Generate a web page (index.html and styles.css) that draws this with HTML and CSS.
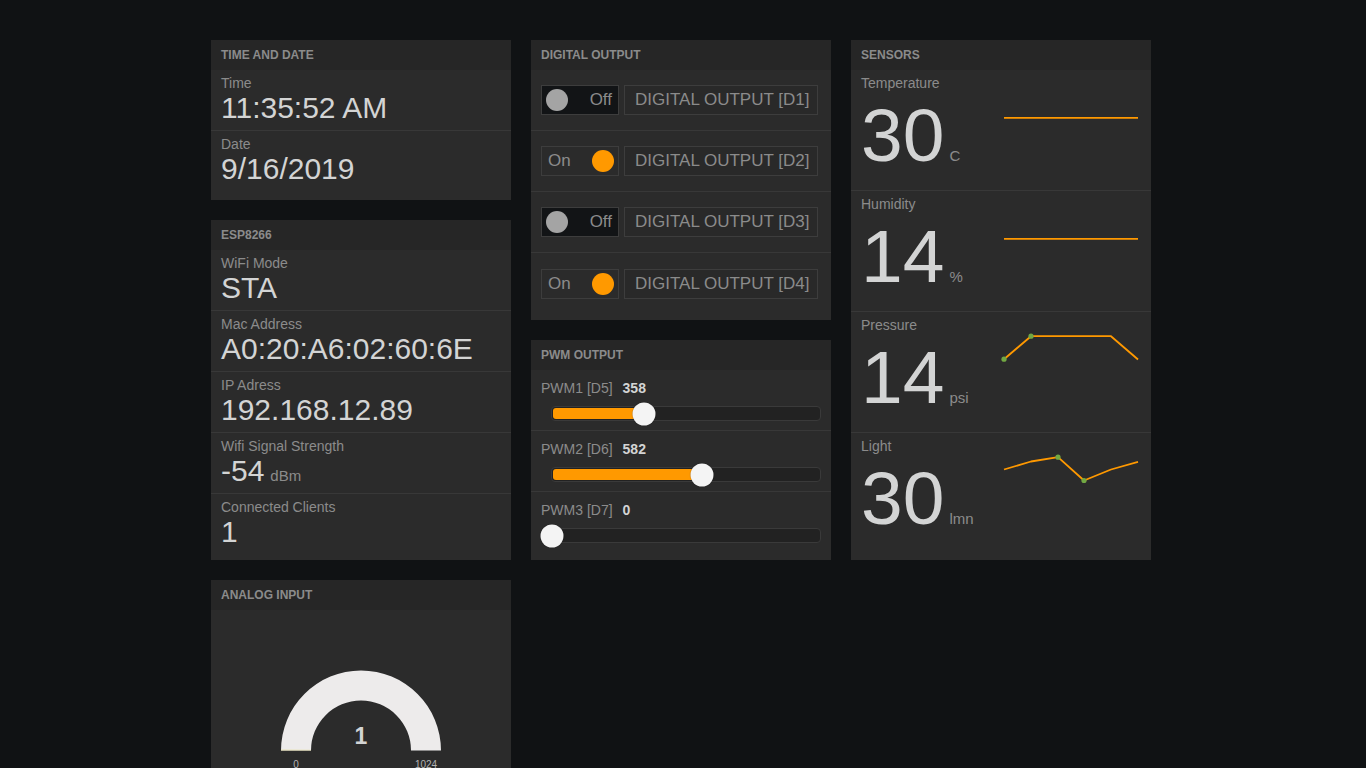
FILE: index.html
```html
<!DOCTYPE html>
<html lang="en">
<head>
<meta charset="utf-8">
<title>ESP8266 Dashboard</title>
<link rel="stylesheet" href="styles.css">
</head>
<body>
<div class="board">
  <div class="col">
    <section class="pane pane-time">
      <h2 class="pane-title">TIME AND DATE</h2>
      <div class="tw"><div class="tw-title">Time</div><div class="tw-value">11:35:52 AM</div></div>
      <div class="tw"><div class="tw-title">Date</div><div class="tw-value">9/16/2019</div></div>
    </section>
    <section class="pane pane-esp">
      <h2 class="pane-title">ESP8266</h2>
      <div class="tw"><div class="tw-title">WiFi Mode</div><div class="tw-value">STA</div></div>
      <div class="tw"><div class="tw-title">Mac Address</div><div class="tw-value">A0:20:A6:02:60:6E</div></div>
      <div class="tw"><div class="tw-title">IP Adress</div><div class="tw-value">192.168.12.89</div></div>
      <div class="tw"><div class="tw-title">Wifi Signal Strength</div><div class="tw-value">-54<span class="unit">dBm</span></div></div>
      <div class="tw"><div class="tw-title">Connected Clients</div><div class="tw-value">1</div></div>
    </section>
    <section class="pane pane-analog">
      <h2 class="pane-title">ANALOG INPUT</h2>
      <svg class="gauge" width="300" height="170" viewBox="0 0 300 170">
        <path d="M70 140.5 A80 80 0 0 1 230 140.5 L200 140.5 A50 50 0 0 0 100 140.5 Z" fill="#edebeb"/>
        <path d="M70 140.5 L100 140.5 L100 139.8 L70 139.6 Z" fill="#e9e3b4"/>
        <text x="150" y="134" class="gauge-value" text-anchor="middle">1</text>
        <text x="85" y="158" class="gauge-limit" text-anchor="middle">0</text>
        <text x="215" y="158" class="gauge-limit" text-anchor="middle">1024</text>
      </svg>
    </section>
  </div>

  <div class="col">
    <section class="pane pane-digital">
      <h2 class="pane-title">DIGITAL OUTPUT</h2>
      <div class="do-row">
        <div class="switch off"><span class="knob"></span><span>Off</span></div>
        <div class="do-label">DIGITAL OUTPUT [D1]</div>
      </div>
      <div class="do-row">
        <div class="switch on"><span>On</span><span class="knob"></span></div>
        <div class="do-label">DIGITAL OUTPUT [D2]</div>
      </div>
      <div class="do-row">
        <div class="switch off"><span class="knob"></span><span>Off</span></div>
        <div class="do-label">DIGITAL OUTPUT [D3]</div>
      </div>
      <div class="do-row">
        <div class="switch on"><span>On</span><span class="knob"></span></div>
        <div class="do-label">DIGITAL OUTPUT [D4]</div>
      </div>
    </section>
    <section class="pane pane-pwm">
      <h2 class="pane-title">PWM OUTPUT</h2>
      <div class="pwm-row">
        <div class="pwm-label">PWM1 [D5]<span class="pwm-val">358</span></div>
        <div class="track"><div class="fill" style="width: calc(34.3% - 1px)"></div><div class="thumb" style="left: 34.3%"></div></div>
      </div>
      <div class="pwm-row">
        <div class="pwm-label">PWM2 [D6]<span class="pwm-val">582</span></div>
        <div class="track"><div class="fill" style="width: calc(55.8% - 1px)"></div><div class="thumb" style="left: 55.8%"></div></div>
      </div>
      <div class="pwm-row">
        <div class="pwm-label">PWM3 [D7]<span class="pwm-val">0</span></div>
        <div class="track"><div class="thumb" style="left: 0%"></div></div>
      </div>
    </section>
  </div>

  <div class="col">
    <section class="pane pane-sensors">
      <h2 class="pane-title">SENSORS</h2>
      <div class="sensor">
        <div class="sensor-main"><div class="tw-title">Temperature</div><div class="big">30<span class="unit">C</span></div></div>
        <svg class="spark" width="142" height="40" viewBox="0 0 142 40"><polyline points="5,27.8 139,27.8" class="spark-line"/></svg>
      </div>
      <div class="sensor">
        <div class="sensor-main"><div class="tw-title">Humidity</div><div class="big">14<span class="unit">%</span></div></div>
        <svg class="spark" width="142" height="40" viewBox="0 0 142 40"><polyline points="5,27.8 139,27.8" class="spark-line"/></svg>
      </div>
      <div class="sensor">
        <div class="sensor-main"><div class="tw-title">Pressure</div><div class="big">14<span class="unit">psi</span></div></div>
        <svg class="spark" width="142" height="40" viewBox="0 0 142 40">
          <polyline points="5,27.2 32,4.2 59,4.2 85,4.2 112,4.2 139,27.5" class="spark-line"/>
          <circle cx="5" cy="27.2" r="2.6" class="spot"/>
          <circle cx="32" cy="4.2" r="2.6" class="spot"/>
        </svg>
      </div>
      <div class="sensor">
        <div class="sensor-main"><div class="tw-title">Light</div><div class="big">30<span class="unit">lmn</span></div></div>
        <svg class="spark" width="142" height="40" viewBox="0 0 142 40">
          <polyline points="5,16.5 32,8.5 59,4.2 85,27.5 112,16.5 139,8.8" class="spark-line"/>
          <circle cx="59" cy="4.2" r="2.6" class="spot"/>
          <circle cx="85" cy="27.5" r="2.6" class="spot"/>
        </svg>
      </div>
    </section>
  </div>
</div>
</body>
</html>
```

FILE: styles.css
```css
html {
  scrollbar-width: none;
  background: #101214;
}
html::-webkit-scrollbar { display: none; }

body {
  margin: 0;
  background: #101214;
  font-family: "Liberation Sans", Arial, Helvetica, sans-serif;
}

.board {
  display: flex;
  gap: 20px;
  padding: 40px 0 0 211px;
}

.col {
  width: 300px;
  display: flex;
  flex-direction: column;
  gap: 20px;
}

.pane {
  background: #2b2b2b;
  box-sizing: border-box;
}

.pane-time { height: 160px; }
.pane-esp { height: 340px; }
.pane-analog { height: 220px; }
.pane-digital { height: 280px; }
.pane-pwm { height: 220px; }
.pane-sensors { height: 520px; }

.pane-title {
  margin: 0;
  height: 29.5px;
  line-height: 31px;
  padding: 0 10px;
  font-size: 12px;
  font-weight: bold;
  color: #8b8b8b;
  background: #262626;
  overflow: hidden;
}

/* text widgets */
.tw {
  height: 61px;
  box-sizing: border-box;
  padding: 5px 10px 0;
  border-bottom: 1px solid #383838;
}
.tw:last-child { border-bottom: none; }

.tw-title {
  font-size: 14px;
  line-height: 17px;
  color: #8b8b8b;
}

.tw-value {
  font-size: 30px;
  line-height: 32.5px;
  color: #d3d4d4;
  white-space: nowrap;
}

.unit {
  font-size: 15px;
  color: #8b8b8b;
  margin-left: 6px;
}

/* digital outputs */
.do-row {
  height: 61px;
  box-sizing: border-box;
  padding: 1px 10px 0;
  border-bottom: 1px solid #383838;
  display: flex;
  align-items: center;
  gap: 5px;
}
.do-row:last-child { border-bottom: none; }

.switch {
  width: 78px;
  height: 30px;
  box-sizing: border-box;
  border: 1px solid #3d3d3d;
  display: flex;
  align-items: center;
  justify-content: space-between;
  font-size: 17px;
  color: #8b8b8b;
}
.switch.off {
  background: #121416;
  padding: 0 6px 0 4px;
}
.switch.on {
  background: #2b2b2b;
  padding: 0 4px 0 6px;
}

.knob {
  width: 22px;
  height: 22px;
  border-radius: 50%;
}
.off .knob { background: #a4a4a4; }
.on .knob { background: #ff9900; }

.do-label {
  width: 194px;
  height: 30px;
  box-sizing: border-box;
  border: 1px solid #3d3d3d;
  background: #292929;
  padding: 0 10px;
  line-height: 28px;
  font-size: 17px;
  color: #8b8b8b;
  white-space: nowrap;
}

/* pwm sliders */
.pwm-row {
  height: 61px;
  box-sizing: border-box;
  padding: 10px 10px 0;
  border-bottom: 1px solid #383838;
}
.pwm-row:last-child { border-bottom: none; }

.pwm-label {
  font-size: 14px;
  line-height: 17px;
  color: #8b8b8b;
}

.pwm-val {
  font-weight: bold;
  color: #d3d4d4;
  margin-left: 10px;
}

.track {
  position: relative;
  margin: 9.5px 0 0 10px;
  width: 270px;
  height: 15px;
  box-sizing: border-box;
  border: 1px solid #3a3a3a;
  border-radius: 4px;
  background: #222222;
}

.fill {
  position: absolute;
  left: 1px;
  top: 1px;
  bottom: 1px;
  background: #ff9900;
  border-radius: 3px;
}

.thumb {
  position: absolute;
  top: 50%;
  width: 23px;
  height: 23px;
  border-radius: 50%;
  background: #f4f4f4;
  transform: translate(-50%, -50%);
  box-shadow: 0 0 1px rgba(0, 0, 0, 0.5);
}

/* sensors */
.sensor {
  height: 121px;
  box-sizing: border-box;
  padding: 5px 10px 0;
  border-bottom: 1px solid #383838;
  display: flex;
  justify-content: space-between;
}
.sensor:last-child { border-bottom: none; }

.big {
  font-size: 75px;
  line-height: 86px;
  color: #d3d4d4;
  white-space: nowrap;
}
.big .unit {
  margin-left: 5px;
}

.spark {
  display: block;
  flex: none;
  margin-top: 15px;
}

.spark-line {
  fill: none;
  stroke: #ff9900;
  stroke-width: 1.8;
  stroke-linejoin: round;
}

.spot {
  fill: #72a843;
}

/* gauge */
.gauge {
  display: block;
}

.gauge-value {
  font-family: "Liberation Sans", Arial, sans-serif;
  font-size: 23px;
  font-weight: bold;
  fill: #d3d4d4;
}

.gauge-limit {
  font-family: "Liberation Sans", Arial, sans-serif;
  font-size: 10px;
  fill: #b3b3b3;
}
```
